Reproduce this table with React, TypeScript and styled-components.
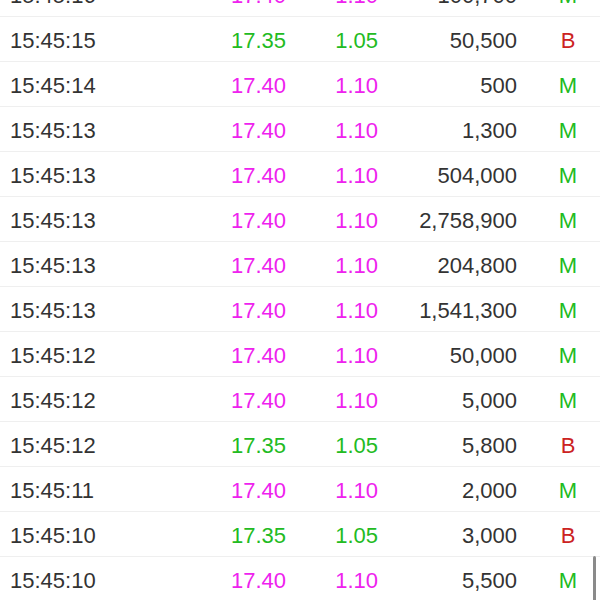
import React, { useLayoutEffect, useRef } from "react";
import styled, { createGlobalStyle } from "styled-components";

const GlobalStyle = createGlobalStyle`
  html, body { margin: 0; padding: 0; background: #ffffff; }
  body { font-family: "Liberation Sans", Arial, sans-serif; }
`;

type Trade = {
  time: string;
  price: string;
  change: string;
  volume: string;
  side: "B" | "M";
};

const trades: Trade[] = [
  { time: "15:45:16", price: "17.40", change: "1.10", volume: "100,700", side: "M" },
  { time: "15:45:15", price: "17.35", change: "1.05", volume: "50,500", side: "B" },
  { time: "15:45:14", price: "17.40", change: "1.10", volume: "500", side: "M" },
  { time: "15:45:13", price: "17.40", change: "1.10", volume: "1,300", side: "M" },
  { time: "15:45:13", price: "17.40", change: "1.10", volume: "504,000", side: "M" },
  { time: "15:45:13", price: "17.40", change: "1.10", volume: "2,758,900", side: "M" },
  { time: "15:45:13", price: "17.40", change: "1.10", volume: "204,800", side: "M" },
  { time: "15:45:13", price: "17.40", change: "1.10", volume: "1,541,300", side: "M" },
  { time: "15:45:12", price: "17.40", change: "1.10", volume: "50,000", side: "M" },
  { time: "15:45:12", price: "17.40", change: "1.10", volume: "5,000", side: "M" },
  { time: "15:45:12", price: "17.35", change: "1.05", volume: "5,800", side: "B" },
  { time: "15:45:11", price: "17.40", change: "1.10", volume: "2,000", side: "M" },
  { time: "15:45:10", price: "17.35", change: "1.05", volume: "3,000", side: "B" },
  { time: "15:45:10", price: "17.40", change: "1.10", volume: "5,500", side: "M" },
  { time: "15:45:09", price: "17.40", change: "1.10", volume: "1,000", side: "M" },
];

const Screen = styled.div`
  position: relative;
  width: 600px;
  height: 600px;
  overflow: hidden;
  background: #ffffff;
`;

const Scroller = styled.div`
  height: 600px;
  overflow-y: auto;
  scrollbar-width: none;
  &::-webkit-scrollbar { display: none; }
`;

const Row = styled.div`
  box-sizing: border-box;
  display: grid;
  grid-template-columns: 190px 86px 92px 139px 1fr;
  align-items: center;
  height: 45px;
  padding: 3px 0 0 10px;
  border-bottom: 1px solid #efefef;
  font-size: 22px;
  color: #333333;
`;

const TimeCell = styled.div`
  text-align: left;
`;

const NumCell = styled.div<{ $tone?: "up" | "even" }>`
  text-align: right;
  color: ${(p) => (p.$tone === "up" ? "#ee22ee" : p.$tone === "even" ? "#22bb22" : "#333333")};
`;

const SideCell = styled.div<{ $side: "B" | "M" }>`
  padding-left: 19px;
  text-align: center;
  color: ${(p) => (p.$side === "B" ? "#cc2222" : "#22bb22")};
`;

const ScrollThumb = styled.div`
  position: absolute;
  right: 4px;
  bottom: -4px;
  width: 3px;
  height: 48px;
  border-radius: 2px;
  background: #8a8a8a;
`;

export default function App() {
  const ref = useRef<HTMLDivElement>(null);
  useLayoutEffect(() => {
    if (ref.current) ref.current.scrollTop = 28;
  }, []);
  return (
    <>
      <GlobalStyle />
      <Screen>
        <Scroller ref={ref}>
          {trades.map((t, i) => {
            const tone = t.side === "B" ? "even" : "up";
            return (
              <Row key={i}>
                <TimeCell>{t.time}</TimeCell>
                <NumCell $tone={tone}>{t.price}</NumCell>
                <NumCell $tone={tone}>{t.change}</NumCell>
                <NumCell>{t.volume}</NumCell>
                <SideCell $side={t.side}>{t.side}</SideCell>
              </Row>
            );
          })}
        </Scroller>
        <ScrollThumb />
      </Screen>
    </>
  );
}
